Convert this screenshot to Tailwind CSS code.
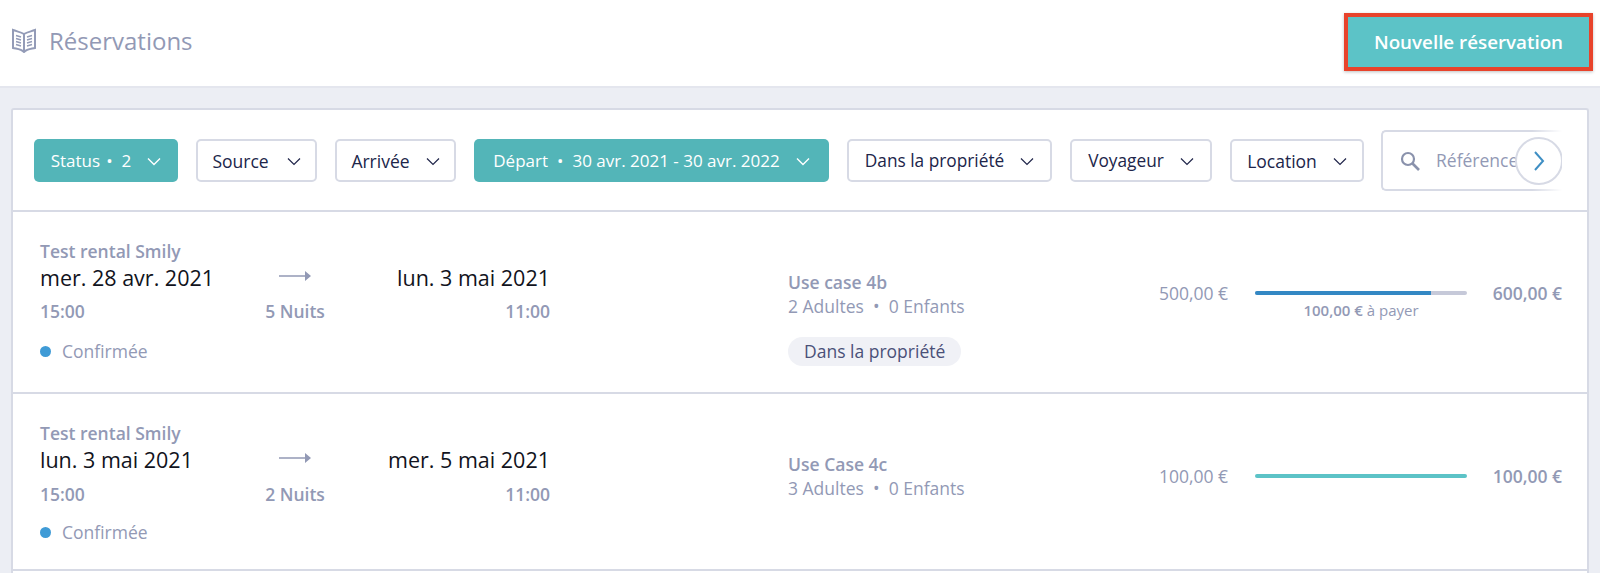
<!DOCTYPE html>
<html lang="fr"><head><meta charset="utf-8"><script src="https://cdn.jsdelivr.net/npm/@tailwindcss/browser@4"></script></head>
<body class="m-0 h-[573px] w-[1600px] overflow-hidden bg-[#eceef4] font-['Open_Sans',sans-serif]">
<header class="flex h-[88px] items-start justify-between border-b-2 border-[#e4e6ee] bg-white pl-[12px] pr-[7px] pt-[13px]">
  <div class="flex h-[55px] items-center gap-[13px]">
    <svg class="h-[25px] w-[24px]" viewBox="0 0 24 25" fill="none" stroke="#939bb7" stroke-width="2"><path d="M12 6 C9 4 5 3.500 1 2 V20 C5 21 9 21 12 24 C15 21 19 21 23 20 V2 C19 3.500 15 4 12 6 Z"/><path d="M12 6V24"/><path d="M4 7.500l5 1.500M4 10.500l5 1.500M4 13.500l5 1.500M4 16.500l5 1.500M20 7.500l-5 1.500M20 10.500l-5 1.500M20 13.500l-5 1.500M20 16.500l-5 1.500" stroke-width="1.500"/></svg>
    <h1 class="text-[24px] leading-[32px] font-normal text-[#9299b5]">Réservations</h1>
  </div>
  <div class="flex h-[58px] w-[249px] items-center justify-center border-[4px] border-[#e8432b] bg-[#5cc3c7] text-[18.800px] font-semibold text-white shadow-[0_1px_3px_rgba(0,0,0,0.25)]">Nouvelle réservation</div>
</header>
<main class="px-[11px] pt-[20px]">
  <section class="h-[480px] w-[1578px] overflow-hidden rounded-t-[3px] border-2 border-b-0 border-[#d7dae5] bg-white">
    <div class="relative flex h-[102px] items-center gap-[18px] border-b-2 border-[#d7dae5] pl-[21px] text-[17px] text-[#20254a]">
      <div class="flex h-[43px] w-[144px] items-center justify-center gap-[16px] rounded-[5px] bg-[#53b5b8] pt-[2px] text-white"><span>Status<span class="ml-[6px] mr-[9px]">•</span>2</span><svg class="h-[9px] w-[14px]" viewBox="0 0 14 9" fill="none" stroke="currentColor" stroke-width="1.400"><path d="M1 1.500l6 6 6-6"/></svg></div>
      <div class="flex h-[43px] w-[121px] items-center justify-center gap-[18px] rounded-[5px] border-2 border-[#d7dae5] pt-[2px] text-[17.500px]"><span>Source</span><svg class="h-[9px] w-[14px]" viewBox="0 0 14 9" fill="none" stroke="currentColor" stroke-width="1.200"><path d="M1 1.500l6 6 6-6"/></svg></div>
      <div class="flex h-[43px] w-[121px] items-center justify-center gap-[16px] rounded-[5px] border-2 border-[#d7dae5] pt-[2px] text-[17.500px]"><span>Arrivée</span><svg class="h-[9px] w-[14px]" viewBox="0 0 14 9" fill="none" stroke="currentColor" stroke-width="1.200"><path d="M1 1.500l6 6 6-6"/></svg></div>
      <div class="flex h-[43px] w-[355px] items-center justify-center gap-[16px] rounded-[5px] bg-[#53b5b8] pt-[2px] text-white"><span>Départ<span class="mx-[9px]">•</span>30 avr. 2021 - 30 avr. 2022</span><svg class="h-[9px] w-[14px]" viewBox="0 0 14 9" fill="none" stroke="currentColor" stroke-width="1.400"><path d="M1 1.500l6 6 6-6"/></svg></div>
      <div class="flex h-[43px] w-[205px] items-center justify-center gap-[16px] rounded-[5px] border-2 border-[#d7dae5] pt-[2px] text-[17.300px]"><span>Dans la propriété</span><svg class="h-[9px] w-[14px]" viewBox="0 0 14 9" fill="none" stroke="currentColor" stroke-width="1.200"><path d="M1 1.500l6 6 6-6"/></svg></div>
      <div class="flex h-[43px] w-[142px] items-center justify-center gap-[16px] rounded-[5px] border-2 border-[#d7dae5] pt-[2px] text-[17.300px]"><span>Voyageur</span><svg class="h-[9px] w-[14px]" viewBox="0 0 14 9" fill="none" stroke="currentColor" stroke-width="1.200"><path d="M1 1.500l6 6 6-6"/></svg></div>
      <div class="flex h-[43px] w-[134px] items-center justify-center gap-[16px] rounded-[5px] border-2 border-[#d7dae5] pt-[2px] text-[17.500px]"><span>Location</span><svg class="h-[9px] w-[14px]" viewBox="0 0 14 9" fill="none" stroke="currentColor" stroke-width="1.200"><path d="M1 1.500l6 6 6-6"/></svg></div>
      <div class="absolute left-[1368px] top-[20px] flex h-[61px] w-[181px] items-center gap-[16px] rounded-l-[5px] border-2 border-r-0 border-[#d7dae5] pl-[17px] text-[17.500px] text-[#9299b5]">
        <svg class="h-[20px] w-[20px] shrink-0" viewBox="0 0 20 20" fill="none" stroke="#8a92ac" stroke-width="2.200"><circle cx="8" cy="8" r="6"/><path d="M12.500 12.500L19 19" stroke-width="2.600"/></svg>
        <span class="whitespace-nowrap">Référence</span>
      </div>
      <div class="absolute left-[1519px] top-[18px] h-[65px] w-[30px] bg-gradient-to-r from-white/0 to-white"></div>
      <div class="absolute left-[1502px] top-[27px] flex h-[48px] w-[48px] items-center justify-center rounded-full border-2 border-[#d7dae5] bg-white">
        <svg class="h-[22px] w-[12px]" viewBox="0 0 12 22" fill="none" stroke="#3f8fc4" stroke-width="2"><path d="M2 2l8 9-8 9"/></svg>
      </div>
      <div class="absolute left-[1549px] top-[18px] h-[65px] w-[27px] bg-white"></div>
    </div>

    <article class="flex h-[182px] border-b-2 border-[#d7dae5] pl-[27px]">
      <div class="w-[510px] pt-[28px]">
        <div class="text-[17.500px] leading-[22px] font-semibold text-[#9299b5]">Test rental Smily</div>
        <div class="grid grid-cols-[1fr_auto_1fr] items-center text-[21.500px] leading-[31px] text-[#111320]"><span>mer. 28 avr. 2021</span><svg class="h-[12px] w-[32px] -translate-y-[2px]" viewBox="0 0 32 12" fill="#9299b5"><path d="M0 5.300h26V1l6 5-6 5V6.700H0z"/></svg><span class="text-right">lun. 3 mai 2021</span></div>
        <div class="mt-[7px] grid grid-cols-[1fr_auto_1fr] text-[17.500px] leading-[22px] font-semibold text-[#9299b5]"><span>15:00</span><span>5 Nuits</span><span class="text-right">11:00</span></div>
        <div class="mt-[18px] flex items-center gap-[11px] text-[17.500px] leading-[22px] text-[#9299b5]"><span class="h-[11px] w-[11px] rounded-full bg-[#3f9bd6]"></span>Confirmée</div>
      </div>
      <div class="ml-[238px] w-[369px] pt-[58px] text-[17.500px] leading-[24px] text-[#9299b5]">
        <div class="font-semibold">Use case 4b</div>
        <div>2 Adultes&nbsp; • &nbsp;0 Enfants</div>
        <div class="mt-[19px] inline-block h-[29px] rounded-full bg-[#f0f1f6] px-[16px] leading-[29px] text-[#4a5078]">Dans la propriété</div>
      </div>
      <div class="flex w-[405px] pt-[69px] text-[17.500px] leading-[24px] text-[#9299b5]">
        <span class="w-[71px] text-right">500,00 €</span>
        <div class="ml-[27px] w-[212px] pt-[10px]">
          <div class="flex h-[4px] overflow-hidden rounded-full bg-[#c6c9d9]"><div class="w-[83%] bg-[#3388c4]"></div></div>
          <div class="mt-[5px] text-center text-[15px] leading-[20px]"><b class="font-semibold">100,00 €</b> à payer</div>
        </div>
        <span class="flex-1 text-right font-semibold">600,00 €</span>
      </div>
    </article>

    <article class="flex h-[177px] border-b-2 border-[#d7dae5] pl-[27px]">
      <div class="w-[510px] pt-[28px]">
        <div class="text-[17.500px] leading-[22px] font-semibold text-[#9299b5]">Test rental Smily</div>
        <div class="grid grid-cols-[1fr_auto_1fr] items-center text-[21.500px] leading-[31px] text-[#111320]"><span>lun. 3 mai 2021</span><svg class="h-[12px] w-[32px] -translate-y-[2px]" viewBox="0 0 32 12" fill="#9299b5"><path d="M0 5.300h26V1l6 5-6 5V6.700H0z"/></svg><span class="text-right">mer. 5 mai 2021</span></div>
        <div class="mt-[8px] grid grid-cols-[1fr_auto_1fr] text-[17.500px] leading-[22px] font-semibold text-[#9299b5]"><span>15:00</span><span>2 Nuits</span><span class="text-right">11:00</span></div>
        <div class="mt-[16px] flex items-center gap-[11px] text-[17.500px] leading-[22px] text-[#9299b5]"><span class="h-[11px] w-[11px] rounded-full bg-[#3f9bd6]"></span>Confirmée</div>
      </div>
      <div class="ml-[238px] w-[369px] pt-[58px] text-[17.500px] leading-[24px] text-[#9299b5]">
        <div class="font-semibold">Use Case 4c</div>
        <div>3 Adultes&nbsp; • &nbsp;0 Enfants</div>
      </div>
      <div class="flex w-[405px] pt-[70px] text-[17.500px] leading-[24px] text-[#9299b5]">
        <span class="w-[71px] text-right">100,00 €</span>
        <div class="ml-[27px] w-[212px] pt-[10px]"><div class="h-[4px] rounded-full bg-[#5cc3c7]"></div></div>
        <span class="flex-1 text-right font-semibold">100,00 €</span>
      </div>
    </article>
  </section>
</main>
</body></html>
